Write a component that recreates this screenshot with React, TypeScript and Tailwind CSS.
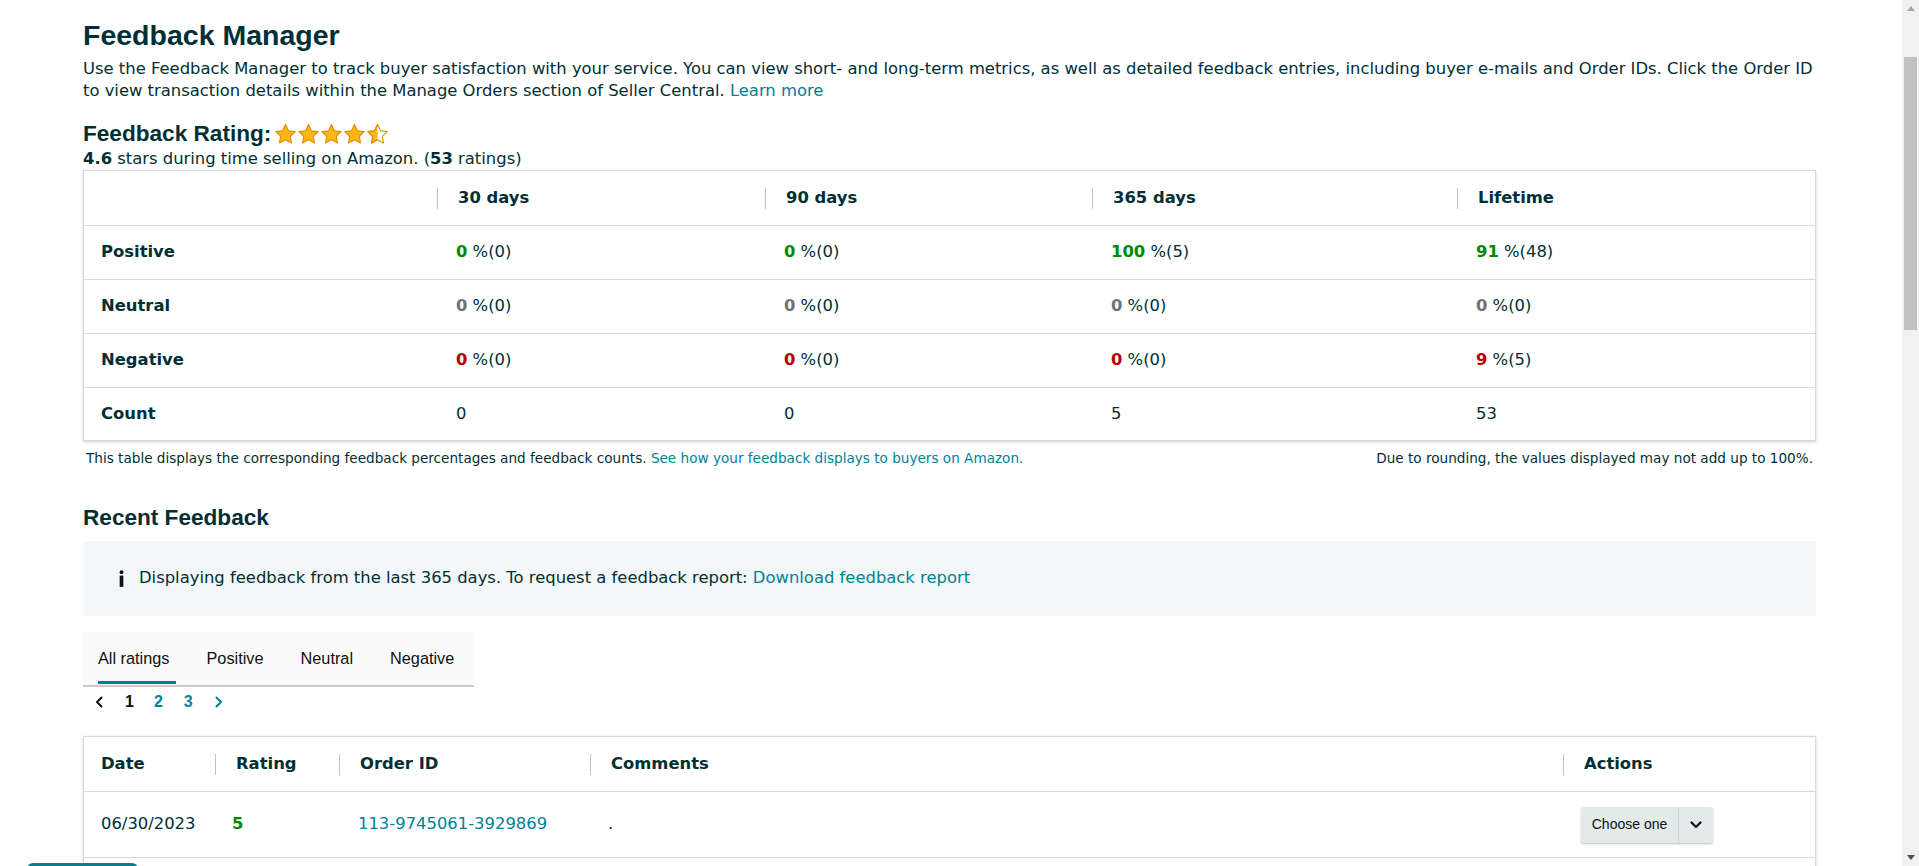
import React from "react";

const body = "font-['DejaVu_Sans',Verdana,sans-serif]";
const arial = "font-['Liberation_Sans',Arial,sans-serif]";

const STAR =
  "M12 1.6l3.1 6.4 7 1-5.05 4.9 1.2 6.95L12 17.55l-6.25 3.3 1.2-6.95L1.9 9l7-1L12 1.6z";

function Star({ half }: { half?: boolean }) {
  return (
    <svg viewBox="0 0 24 24" className="h-[23px] w-[23px]">
      <defs>
        <clipPath id="half-left">
          <rect x="0" y="0" width="12" height="24" />
        </clipPath>
      </defs>
      <path d={STAR} fill={half ? "#ffffff" : "#ffb612"} stroke="#d98c00" strokeWidth="1.1" strokeLinejoin="round" />
      {half && (
        <path d={STAR} fill="#ffb612" clipPath="url(#half-left)" stroke="#d98c00" strokeWidth="1.1" strokeLinejoin="round" />
      )}
    </svg>
  );
}

const metrics = [
  {
    label: "Positive",
    color: "text-[#008a00]",
    vals: [
      ["0", "0"],
      ["0", "0"],
      ["100", "5"],
      ["91", "48"],
    ],
  },
  {
    label: "Neutral",
    color: "text-[#6f7373]",
    vals: [
      ["0", "0"],
      ["0", "0"],
      ["0", "0"],
      ["0", "0"],
    ],
  },
  {
    label: "Negative",
    color: "text-[#b80000]",
    vals: [
      ["0", "0"],
      ["0", "0"],
      ["0", "0"],
      ["9", "5"],
    ],
  },
];

const feedback = [
  ["06/30/2023", "5", "113-9745061-3929869", "."],
  ["06/12/2023", "5", "114-2208417-6653025", "Great seller, fast shipping."],
  ["05/27/2023", "5", "111-6630194-2281746", "Item as described."],
  ["05/09/2023", "5", "112-4471306-9015542", "Arrived on time, well packed."],
  ["04/18/2023", "5", "113-0592273-7740138", "Thank you!"],
  ["03/30/2023", "5", "114-8813560-1127409", "Excellent."],
  ["03/02/2023", "5", "111-3378021-5590614", "Very happy with my order."],
  ["02/14/2023", "4", "112-9904152-3368207", "Good."],
  ["01/21/2023", "5", "113-5216689-0043751", "Perfect."],
  ["12/28/2022", "5", "114-7759031-6682490", "Fast delivery."],
  ["12/05/2022", "5", "111-2046687-9931528", "Would buy again."],
  ["11/16/2022", "5", "112-6180354-2207193", "As expected."],
  ["10/29/2022", "5", "113-8842719-4456012", "Great."],
  ["10/03/2022", "5", "114-1375508-8801264", "Good seller."],
  ["09/14/2022", "5", "111-9420163-3375819", "Thanks."],
];

function HeadSep({ children }: { children: React.ReactNode }) {
  return (
    <div className="flex h-full items-center">
      <span className="h-[21px] border-l border-[#bcc4c4]" />
      <span className="pl-[20px] font-bold">{children}</span>
    </div>
  );
}

function Chevron({ dir, color }: { dir: "left" | "right"; color: string }) {
  return (
    <svg viewBox="0 0 8 12" className="h-[12px] w-[8px]">
      <path
        d={dir === "left" ? "M6.5 1.5 2 6l4.5 4.5" : "M1.5 1.5 6 6l-4.5 4.5"}
        fill="none"
        stroke={color}
        strokeWidth="2"
        strokeLinecap="round"
        strokeLinejoin="round"
      />
    </svg>
  );
}

function Scrollbar() {
  return (
    <div className="fixed right-0 top-0 flex h-screen w-[17px] flex-col bg-[#f1f1f1]">
      <div className="flex h-[17px] items-center justify-center">
        <svg viewBox="0 0 8 5" className="h-[5px] w-[8px]">
          <path d="M4 0 8 5H0z" fill="#a3a3a3" />
        </svg>
      </div>
      <div className="flex-1 px-[2px]">
        <div className="mt-[40px] h-[273px] bg-[#c1c1c1]" />
      </div>
      <div className="flex h-[17px] items-center justify-center">
        <svg viewBox="0 0 8 5" className="h-[5px] w-[8px]">
          <path d="M0 0h8L4 5z" fill="#505050" />
        </svg>
      </div>
    </div>
  );
}

export default function App() {
  const mcols = "grid grid-cols-[353px_328px_327px_365px_1fr]";
  const fcols = "grid grid-cols-[131px_124px_251px_973px_1fr]";

  return (
    <div className={`${body} min-h-screen bg-white pb-[80px] pl-[83px] pr-[103px] text-[#002f36]`}>
      <h1 className={`${arial} pt-[19px] text-[28.5px] font-bold leading-[32px] text-[#002f36]`}>Feedback Manager</h1>
      <p className="mt-[7px] text-[16.4px] leading-[22px]">
        Use the Feedback Manager to track buyer satisfaction with your service. You can view short- and long-term
        metrics, as well as detailed feedback entries, including buyer e-mails and Order IDs. Click the Order ID to view
        transaction details within the Manage Orders section of Seller Central.{" "}
        <a className="text-[#008296]">Learn more</a>
      </p>

      <div className="mt-[19px] flex items-center gap-[3px]">
        <h2 className={`${arial} text-[22.6px] font-bold leading-[26px]`}>Feedback Rating:</h2>
        <div className="flex items-center">
          <Star />
          <Star />
          <Star />
          <Star />
          <Star half />
        </div>
      </div>
      <p className="mt-[1px] text-[16.4px] leading-[22px]">
        <b>4.6</b> stars during time selling on Amazon. (<b>53</b> ratings)
      </p>

      <div className="border border-[#d5dbdb] text-[16.4px] shadow-[0_1px_3px_rgba(0,0,0,0.18)]">
        <div className={`${mcols} h-[54px]`}>
          <div />
          <HeadSep>30 days</HeadSep>
          <HeadSep>90 days</HeadSep>
          <HeadSep>365 days</HeadSep>
          <HeadSep>Lifetime</HeadSep>
        </div>
        {metrics.map((m) => (
          <div key={m.label} className={`${mcols} h-[54px] items-center border-t border-[#d5dbdb]`}>
            <div className="pl-[17px] font-bold">{m.label}</div>
            {m.vals.map(([p, c], i) => (
              <div key={i} className="pl-[19px]">
                <span className={`font-bold ${m.color}`}>{p}</span> %({c})
              </div>
            ))}
          </div>
        ))}
        <div className={`${mcols} h-[53px] items-center border-t border-[#d5dbdb]`}>
          <div className="pl-[17px] font-bold">Count</div>
          <div className="pl-[19px]">0</div>
          <div className="pl-[19px]">0</div>
          <div className="pl-[19px]">5</div>
          <div className="pl-[19px]">53</div>
        </div>
      </div>

      <div className="mt-[8px] flex justify-between px-[3px] text-[13.6px] leading-[18px]">
        <p>
          This table displays the corresponding feedback percentages and feedback counts.{" "}
          <a className="text-[#008296]">See how your feedback displays to buyers on Amazon.</a>
        </p>
        <p>Due to rounding, the values displayed may not add up to 100%.</p>
      </div>

      <h2 className={`${arial} mt-[38px] text-[22.6px] font-bold leading-[26px]`}>Recent Feedback</h2>

      <div className="mt-[10px] flex h-[75px] items-center bg-[#f3f7f7] pl-[36px] text-[16.4px]">
        <svg viewBox="0 0 6 20" className="mr-[15px] h-[19px] w-[5px]">
          <circle cx="3" cy="2.4" r="2.3" fill="#0f1111" />
          <rect x="0.8" y="6.5" width="4.4" height="13.5" fill="#0f1111" />
        </svg>
        <span>
          Displaying feedback from the last 365 days. To request a feedback report:{" "}
          <a className="text-[#008296]">Download feedback report</a>
        </span>
      </div>

      <div
        className={`${arial} mt-[16px] flex h-[55px] w-[391px] gap-[37px] border-b-2 border-[#c9cccc] bg-[#fafafa] pl-[15px] text-[16.3px] text-[#0f1111]`}
      >
        <div className="relative flex items-center">
          All ratings
          <span className="absolute bottom-[1px] left-0 right-[-6px] h-[3px] bg-[#008296]" />
        </div>
        <div className="flex items-center">Positive</div>
        <div className="flex items-center">Neutral</div>
        <div className="flex items-center">Negative</div>
      </div>

      <div className={`${arial} mt-[5px] flex h-[20px] items-center pl-[12px] text-[16px] font-bold`}>
        <Chevron dir="left" color="#0f1111" />
        <span className="ml-[22px] text-[#0f1111]">1</span>
        <span className="ml-[20px] text-[#008296]">2</span>
        <span className="ml-[21px] text-[#008296]">3</span>
        <span className="ml-[22px]">
          <Chevron dir="right" color="#008296" />
        </span>
      </div>

      <div className="mt-[24px] border border-[#d5dbdb] text-[16.4px] shadow-[0_1px_3px_rgba(0,0,0,0.18)]">
        <div className={`${fcols} h-[54px]`}>
          <div className="flex items-center pl-[17px] font-bold">Date</div>
          <HeadSep>Rating</HeadSep>
          <HeadSep>Order ID</HeadSep>
          <HeadSep>Comments</HeadSep>
          <HeadSep>Actions</HeadSep>
        </div>
        {feedback.map(([date, rating, order, comment]) => (
          <div key={order} className={`${fcols} h-[66px] items-center border-t border-[#d5dbdb]`}>
            <div className="pl-[17px]">{date}</div>
            <div className="pl-[17px] font-bold text-[#008a00]">{rating}</div>
            <div className="pl-[19px] text-[#008296]">{order}</div>
            <div className="pl-[18px]">{comment}</div>
            <div className="pl-[18px]">
              <div
                className={`${arial} flex h-[36px] w-[132px] items-stretch rounded-[3px] bg-[#e3eaea] text-[14px] text-[#0f1111] shadow-[0_1px_2px_rgba(0,0,0,0.25)]`}
              >
                <span className="flex w-[97px] items-center justify-center">Choose one</span>
                <span className="flex flex-1 items-center justify-center border-l border-[#cdd5d5]">
                  <svg viewBox="0 0 12 8" className="h-[8px] w-[12px]">
                    <path
                      d="M1.5 1.5 6 6l4.5-4.5"
                      fill="none"
                      stroke="#0f1111"
                      strokeWidth="2.2"
                      strokeLinecap="round"
                      strokeLinejoin="round"
                    />
                  </svg>
                </span>
              </div>
            </div>
          </div>
        ))}
      </div>

      <div className="fixed bottom-[-37px] left-[27px] h-[40px] w-[111px] rounded-t-[6px] bg-[#0b7b8b]" />
      <Scrollbar />
    </div>
  );
}
